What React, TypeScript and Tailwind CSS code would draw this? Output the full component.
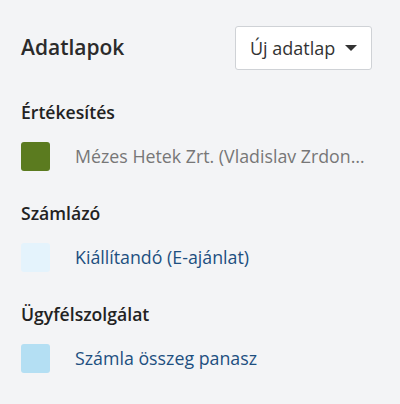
import React from 'react';

type Item = { label: string; color: string; muted?: boolean };
type Group = { title: string; items: Item[] };

const groups: Group[] = [
  { title: 'Értékesítés', items: [{ label: 'Mézes Hetek Zrt. (Vladislav Zrdonovics)', color: 'bg-[#5b7b1f]', muted: true }] },
  { title: 'Számlázó', items: [{ label: 'Kiállítandó (E-ajánlat)', color: 'bg-[#e4f3fc]' }] },
  { title: 'Ügyfélszolgálat', items: [{ label: 'Számla összeg panasz', color: 'bg-[#b4dff3]' }] },
];

export default function App() {
  return (
    <div className="min-h-[404px] w-[400px] bg-[#f3f4f6] pl-[21px] pr-[28px] pt-[26px] font-['Open_Sans',sans-serif]">
      {/* Header */}
      <div className="flex h-[44px] items-center justify-between">
        <h2 className="text-[21px] font-semibold text-[#2b2b2b]">Adatlapok</h2>
        <button className="flex h-[44px] w-[137px] items-center rounded-[3px] border border-[#cfd2d6] bg-white pl-[14px] text-[18px] text-[#333]">
          Új adatlap
          <svg className="ml-[10px]" width="12" height="7" viewBox="0 0 12 7">
            <path d="M0 0h12L6 6z" fill="#333" />
          </svg>
        </button>
      </div>

      {groups.map((g) => (
        <div key={g.title} className="mt-[30px]">
          <h3 className="text-[17.6px] leading-[24px] font-semibold text-[#222]">{g.title}</h3>
          {g.items.map((it) => (
            <div key={it.label} className="mr-[2px] mt-[18px] flex h-[29px] items-center">
              <div className={`h-[29px] w-[29px] shrink-0 rounded-[3px] ${it.color}`} />
              <span
                className={`ml-[25px] min-w-0 truncate text-[17.8px] ${it.muted ? 'text-[#777]' : 'text-[#1d4f80]'}`}
              >
                {it.label}
              </span>
            </div>
          ))}
        </div>
      ))}
    </div>
  );
}
